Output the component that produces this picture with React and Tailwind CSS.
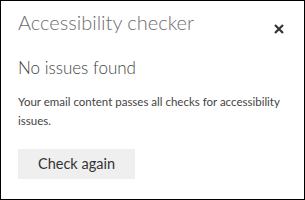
export default function App() {
  return (
    <div
      className="w-[305px] h-[200px] border border-black bg-white pl-[17px] pr-[12px] pt-[7px]"
      style={{ fontFamily: 'Lato, "Open Sans", sans-serif' }}
    >
      <div className="flex items-start justify-between">
        <h1 className="text-[20px] leading-[28px] font-light text-[#6e6e6e]">
          Accessibility checker
        </h1>
        <button type="button" className="mt-[16px] mr-[8px] w-[10px] h-[10px] text-[#333333]">
          <svg viewBox="0 0 10 10" className="w-[10px] h-[10px]">
            <path d="M1 1 L9 9 M9 1 L1 9" stroke="currentColor" strokeWidth="2.2" />
          </svg>
        </button>
      </div>

      <h2 className="mt-[20px] text-[17px] leading-[24px] font-light text-[#444444]">
        No issues found
      </h2>

      <p className="mt-[12px] text-[11.5px] leading-[19px] text-[#444444]">
        Your email content passes all checks for accessibility issues.
      </p>

      <button
        type="button"
        className="mt-[19px] w-[117px] h-[30px] bg-[#efefef] text-[14.5px] font-normal text-[#333333]"
      >
        Check again
      </button>
    </div>
  )
}
